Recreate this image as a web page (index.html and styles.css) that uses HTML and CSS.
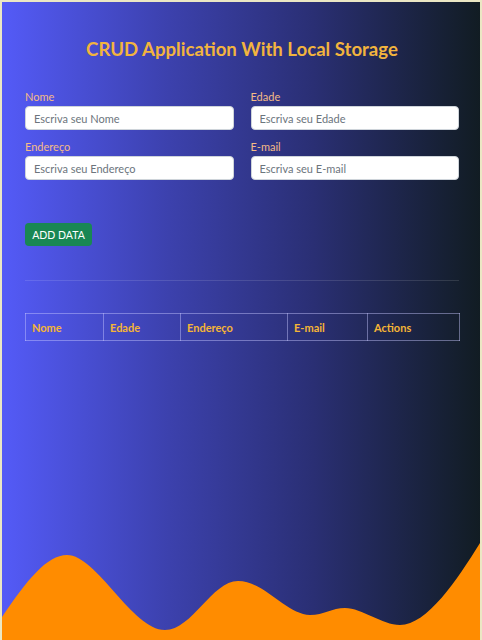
FILE: index.html
```html
<!DOCTYPE html>
<html lang="pt">
<head>
<meta charset="utf-8">
<title>CRUD Application With Local Storage</title>
<link rel="stylesheet" href="styles.css">
</head>
<body>
  <main class="container">
    <h1 class="title">CRUD Application With Local Storage</h1>
    <form class="form">
      <div class="field">
        <label for="nome">Nome</label>
        <input id="nome" type="text" placeholder="Escriva seu Nome">
      </div>
      <div class="field">
        <label for="edade">Edade</label>
        <input id="edade" type="text" placeholder="Escriva seu Edade">
      </div>
      <div class="field">
        <label for="endereco">Endereço</label>
        <input id="endereco" type="text" placeholder="Escriva seu Endereço">
      </div>
      <div class="field">
        <label for="email">E-mail</label>
        <input id="email" type="text" placeholder="Escriva seu E-mail">
      </div>
    </form>
    <button class="btn-add" type="button">ADD DATA</button>
    <hr class="divider">
    <table class="data-table">
      <thead>
        <tr>
          <th class="c-nome">Nome</th>
          <th class="c-edade">Edade</th>
          <th class="c-end">Endereço</th>
          <th class="c-email">E-mail</th>
          <th class="c-act">Actions</th>
        </tr>
      </thead>
      <tbody></tbody>
    </table>
  </main>
  <svg class="wave" viewBox="0 0 478 100" preserveAspectRatio="none" aria-hidden="true">
    <path d="M0,77 C25,40 45,15 65,15 C95,15 130,90 163,90 C190,90 210,41 236,41 C262,41 285,75 308,75 C322,75 330,68 343,68 C360,68 380,85 398,85 C425,85 455,40 478,3 L478,100 L0,100 Z" fill="#ff8c00"/>
  </svg>
</body>
</html>
```

FILE: styles.css
```css
* { box-sizing: border-box; }

html, body { height: 100%; }

body {
  margin: 0;
  border: 2px solid #ebe7c4;
  border-bottom: 0;
  background: linear-gradient(90deg, #545bf8 0%, #3c41ad 35%, #2a2f74 65%, #111c22 100%);
  font-family: Lato, "Open Sans", sans-serif;
  display: flex;
  flex-direction: column;
  overflow: hidden;
}

.container {
  width: 434px;
  margin-left: 23px;
}

.title {
  margin: 34px 0 0;
  text-align: center;
  font-size: 18.6px;
  font-weight: 700;
  color: #f2b43e;
  line-height: 26px;
}

.form {
  margin-top: 28px;
  display: grid;
  grid-template-columns: 1fr 1fr;
  column-gap: 17px;
  row-gap: 10px;
}

.field {
  display: flex;
  flex-direction: column;
}

.field label {
  font-size: 11px;
  line-height: 14px;
  color: #f4bb86;
  margin-bottom: 2px;
}

.field input {
  height: 24px;
  border: 1px solid #ced4da;
  border-radius: 4px;
  background: #fff;
  padding: 0 8px;
  font-family: inherit;
  font-size: 11px;
  color: #212529;
}

.field input::placeholder { color: #6c757d; }

.btn-add {
  display: block;
  margin-top: 43px;
  height: 23px;
  width: 67px;
  padding: 0;
  border: 0;
  border-radius: 4px;
  background: #198754;
  color: #fff;
  font-family: inherit;
  font-size: 10.5px;
}

.divider {
  margin: 34px 0 0;
  border: 0;
  border-top: 1px solid rgba(255, 255, 255, 0.12);
}

.data-table {
  margin-top: 32px;
  width: 434px;
  border-collapse: collapse;
  table-layout: fixed;
}

.data-table th {
  height: 27px;
  border: 1px solid rgba(200, 200, 255, 0.45);
  text-align: left;
  padding: 0 6px;
  font-size: 11px;
  font-weight: 700;
  color: #f5b536;
}

.c-nome { width: 78px; }
.c-edade { width: 77px; }
.c-end { width: 107px; }
.c-email { width: 80px; }
.c-act { width: 92px; }

.wave {
  display: block;
  margin-top: auto;
  width: 478px;
  height: 100px;
}
```
